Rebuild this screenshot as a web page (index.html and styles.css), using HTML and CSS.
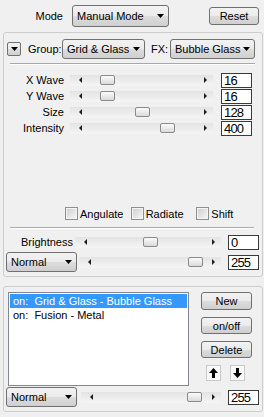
FILE: index.html
```html
<!DOCTYPE html>
<html lang="en">
<head>
  <meta charset="UTF-8">
  <meta name="viewport" content="width=device-width, initial-scale=1.0">
  <title>Effects</title>
  <link rel="stylesheet" href="styles.css">
</head>
<body>
  <div class="topbar">
    <span class="mode-label">Mode</span>
    <div class="dropdown dd-mode">
      <span>Manual Mode</span>
      <svg class="caret" width="7" height="4" viewBox="0 0 7 4"><path d="M0 0h7L3.5 4z"/></svg>
    </div>
    <div class="btn btn-reset">Reset</div>
  </div>

  <div class="panel panel-fx">
    <div class="fx-head">
      <div class="btn btn-collapse">
        <svg width="7" height="4" viewBox="0 0 7 4"><path d="M0 0h7L3.5 4z"/></svg>
      </div>
      <span class="group-label">Group:</span>
      <div class="dropdown dd-group">
        <span>Grid &amp; Glass</span>
        <svg class="caret" width="7" height="4" viewBox="0 0 7 4"><path d="M0 0h7L3.5 4z"/></svg>
      </div>
      <span class="fx-label">FX:</span>
      <div class="dropdown dd-fx">
        <span>Bubble Glass</span>
        <svg class="caret" width="7" height="4" viewBox="0 0 7 4"><path d="M0 0h7L3.5 4z"/></svg>
      </div>
    </div>

    <div class="sep sep-top"></div>

    <div class="params">
      <div class="param-row">
        <span class="param-label">X Wave</span>
        <div class="slider s-param"><i class="arr arr-left"></i><span class="thumb" style="left:30px"></span><i class="arr arr-right"></i></div>
        <div class="num">16</div>
      </div>
      <div class="param-row">
        <span class="param-label">Y Wave</span>
        <div class="slider s-param"><i class="arr arr-left"></i><span class="thumb" style="left:30px"></span><i class="arr arr-right"></i></div>
        <div class="num">16</div>
      </div>
      <div class="param-row">
        <span class="param-label">Size</span>
        <div class="slider s-param"><i class="arr arr-left"></i><span class="thumb" style="left:65px"></span><i class="arr arr-right"></i></div>
        <div class="num">128</div>
      </div>
      <div class="param-row">
        <span class="param-label">Intensity</span>
        <div class="slider s-param"><i class="arr arr-left"></i><span class="thumb" style="left:90px"></span><i class="arr arr-right"></i></div>
        <div class="num">400</div>
      </div>
    </div>

    <div class="checks">
      <label class="check"><span class="box"></span>Angulate</label>
      <label class="check"><span class="box"></span>Radiate</label>
      <label class="check"><span class="box"></span>Shift</label>
    </div>

    <div class="sep sep-bottom"></div>

    <div class="row row-bright">
      <span class="bright-label">Brightness</span>
      <div class="slider s-bright"><i class="arr arr-left"></i><span class="thumb" style="left:68px"></span><i class="arr arr-right"></i></div>
      <div class="num num-low">0</div>
    </div>
    <div class="row row-blend">
      <div class="dropdown dd-normal">
        <span>Normal</span>
        <svg class="caret" width="7" height="4" viewBox="0 0 7 4"><path d="M0 0h7L3.5 4z"/></svg>
      </div>
      <div class="slider s-blend"><i class="arr arr-left"></i><span class="thumb" style="left:109px"></span><i class="arr arr-right"></i></div>
      <div class="num num-low">255</div>
    </div>
  </div>

  <div class="panel panel-layers">
    <div class="layers-main">
      <div class="layer-list">
        <div class="layer selected">on:&nbsp; Grid &amp; Glass - Bubble Glass</div>
        <div class="layer">on:&nbsp; Fusion - Metal</div>
      </div>
      <div class="layer-buttons">
        <div class="btn btn-layer btn-new">New</div>
        <div class="btn btn-layer">on/off</div>
        <div class="btn btn-layer">Delete</div>
        <div class="move-buttons">
          <div class="btn-move">
            <svg width="9" height="10" viewBox="0 0 9 10"><path d="M4.5 0L9 5H6v5H3V5H0z"/></svg>
          </div>
          <div class="btn-move">
            <svg width="9" height="10" viewBox="0 0 9 10"><path d="M4.5 10L9 5H6V0H3v5H0z"/></svg>
          </div>
        </div>
      </div>
    </div>
    <div class="row row-blend">
      <div class="dropdown dd-normal">
        <span>Normal</span>
        <svg class="caret" width="7" height="4" viewBox="0 0 7 4"><path d="M0 0h7L3.5 4z"/></svg>
      </div>
      <div class="slider s-layer"><i class="arr arr-left"></i><span class="thumb" style="left:106px"></span><i class="arr arr-right"></i></div>
      <div class="num num-low">255</div>
    </div>
  </div>
</body>
</html>
```

FILE: styles.css
```css
body {
  margin: 0;
  width: 264px;
  height: 417px;
  background: #f0f0f0;
  font-family: "Liberation Sans", Arial, sans-serif;
  font-size: 11px;
  color: #000;
  overflow: hidden;
}

/* shared controls */
.dropdown {
  display: flex;
  align-items: center;
  justify-content: space-between;
  box-sizing: border-box;
  height: 20px;
  padding: 0 4px;
  border: 1px solid #707070;
  border-radius: 3px;
  background: linear-gradient(#f2f2f2 0%, #ebebeb 50%, #dddddd 51%, #cfcfcf 100%);
  white-space: nowrap;
}
.caret {
  display: block;
  fill: #000;
}
.btn {
  display: flex;
  justify-content: center;
  align-items: center;
  box-sizing: border-box;
  border: 1px solid #707070;
  border-radius: 3px;
  background: linear-gradient(#f2f2f2 0%, #ebebeb 50%, #dddddd 51%, #cfcfcf 100%);
}
.num {
  box-sizing: border-box;
  width: 31px;
  height: 15px;
  margin-left: 8px;
  padding-left: 2px;
  border: 1px solid #3a3a3a;
  background: #fff;
  font-size: 13px;
  line-height: 13px;
  letter-spacing: -0.8px;
}
.num-low {
  margin-left: 7px;
}
.slider {
  position: relative;
  display: flex;
  align-items: center;
  justify-content: space-between;
  box-sizing: border-box;
  height: 11px;
  padding: 0 6px 0 9px;
  background: linear-gradient(#e3e3e3, #f5f5f5);
}
.arr {
  width: 0;
  height: 0;
  border-top: 3px solid transparent;
  border-bottom: 3px solid transparent;
}
.arr-left {
  border-right: 3px solid #1e1e1e;
}
.arr-right {
  border-left: 3px solid #1e1e1e;
}
.thumb {
  position: absolute;
  top: 0;
  box-sizing: border-box;
  width: 15px;
  height: 10px;
  border: 1px solid #8a8a8a;
  border-radius: 2px;
  background: linear-gradient(#fbfbfb, #dadada);
}
.panel {
  box-sizing: border-box;
  width: 260px;
  margin-left: 3px;
  border: 1px solid #cdcdcd;
  border-radius: 3px;
}
.sep {
  border-top: 1px solid #a8a8a8;
  border-bottom: 1px solid #fff;
}
.row {
  display: flex;
  align-items: center;
}

/* top bar */
.topbar {
  display: flex;
  align-items: center;
  height: 22px;
  padding-top: 5px;
}
.mode-label {
  width: 63px;
  margin-right: 9px;
  text-align: right;
}
.dd-mode {
  width: 97px;
  height: 22px;
}
.btn-reset {
  width: 50px;
  height: 18px;
  margin-left: 40px;
}

/* effect panel */
.panel-fx {
  margin-top: 5px;
  padding-bottom: 4px;
}
.fx-head {
  display: flex;
  align-items: center;
  height: 20px;
  margin-top: 6px;
  padding-left: 3px;
}
.btn-collapse {
  width: 14px;
  height: 14px;
  border-radius: 2px;
}
.btn-collapse svg {
  fill: #000;
}
.group-label {
  width: 34px;
  margin-left: 7px;
}
.dd-group {
  width: 83px;
}
.fx-label {
  width: 19px;
  margin-left: 6px;
}
.dd-fx {
  width: 85px;
}
.sep-top {
  margin: 4px 7px 0 6px;
}
.params {
  margin-top: 7px;
}
.param-row {
  display: flex;
  align-items: center;
  height: 16px;
}
.param-label {
  width: 60px;
  margin-right: 6px;
  text-align: right;
}
.s-param {
  width: 143px;
}
.checks {
  display: flex;
  align-items: center;
  height: 13px;
  margin-top: 71px;
  padding-left: 61px;
}
.check {
  display: flex;
  align-items: center;
  gap: 2px;
  width: 69px;
}
.box {
  box-sizing: border-box;
  width: 13px;
  height: 13px;
  border: 1px solid #8e8f8f;
  background: linear-gradient(135deg, #cdcdcd, #f8f8f8);
  box-shadow: inset 0 0 0 1px #f4f4f4;
}
.sep-bottom {
  margin: 7px 8px 0 6px;
}
.row-bright {
  height: 16px;
  margin-top: 5px;
}
.bright-label {
  width: 69px;
  text-align: right;
}
.s-bright {
  width: 146px;
  margin-left: 2px;
}
.row-blend {
  height: 20px;
  margin-top: 2px;
}
.dd-normal {
  width: 71px;
  margin-left: 2px;
}
.s-blend {
  width: 142px;
  margin-left: 2px;
}

/* layer panel */
.panel-layers {
  margin-top: 9px;
  padding-bottom: 4px;
}
.layers-main {
  display: flex;
  margin-top: 5px;
  padding-left: 4px;
}
.layer-list {
  box-sizing: border-box;
  width: 181px;
  height: 94px;
  padding: 1px;
  border: 1px solid #828790;
  background: #fff;
}
.layer {
  height: 14px;
  padding-left: 3px;
  line-height: 14px;
  white-space: nowrap;
}
.selected {
  background: #3399ff;
  color: #fff;
}
.layer-buttons {
  display: flex;
  flex-direction: column;
  width: 51px;
  margin-left: 12px;
}
.btn-layer {
  height: 17px;
  margin-top: 7px;
}
.btn-new {
  height: 18px;
  margin-top: 0;
}
.move-buttons {
  display: flex;
  gap: 9px;
  margin-top: 7px;
  padding-left: 5px;
}
.btn-move {
  display: flex;
  justify-content: center;
  align-items: center;
  box-sizing: border-box;
  width: 15px;
  height: 16px;
  border: 1px solid #c9c9c9;
  background: #f8f8f8;
}
.btn-move svg {
  fill: #000;
}
.panel-layers .row-blend {
  margin-top: 1px;
}
.s-layer {
  width: 140px;
  margin-left: 4px;
}
```
